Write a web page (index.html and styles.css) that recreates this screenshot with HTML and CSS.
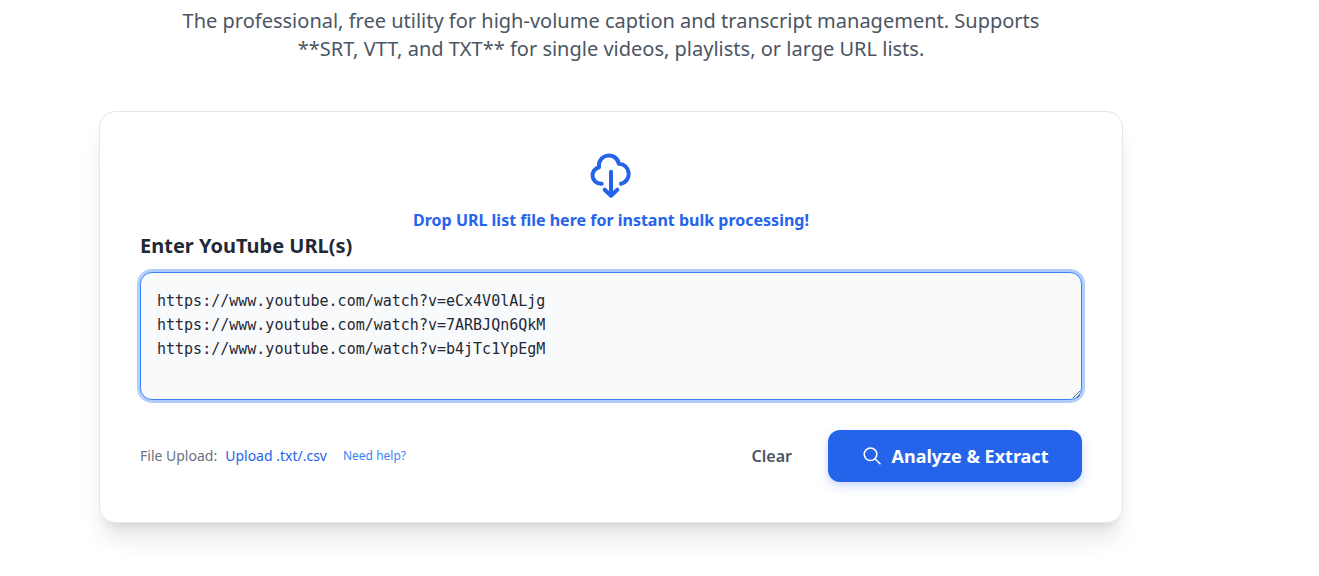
FILE: index.html
```
<!DOCTYPE html>
<html lang="en">
<head>
<meta charset="utf-8">
<meta name="viewport" content="width=device-width, initial-scale=1">
<title>Caption and transcript extractor</title>
<link rel="stylesheet" href="styles.css">
</head>
<body>
<main class="page">
  <p class="intro">The professional, free utility for high-volume caption and transcript management. Supports **SRT, VTT, and TXT** for single videos, playlists, or large URL lists.</p>
  <form class="card">
    <div class="drop">
      <svg class="drop-icon" viewBox="0 0 48 48" aria-hidden="true">
        <path d="M14.7 31.8H13.8A8.4 8.4 0 0 1 12.1 15.2A10 10 0 0 1 31.8 11.7A10.2 10.2 0 0 1 34 31.8M24 19.7V43.5M17.7 37.7L24 43.7L30.3 37.7"/>
      </svg>
      <p class="drop-text">Drop URL list file here for instant bulk processing!</p>
    </div>
    <label class="label" for="urls">Enter YouTube URL(s)</label>
    <textarea class="urls" id="urls" spellcheck="false">https://www.youtube.com/watch?v=eCx4V0lALjg
https://www.youtube.com/watch?v=7ARBJQn6QkM
https://www.youtube.com/watch?v=b4jTc1YpEgM</textarea>
    <div class="actions">
      <div class="upload">
        <span class="upload-label">File Upload:</span>
        <a class="upload-link" href="#upload">Upload .txt/.csv</a>
        <a class="help-link" href="#help">Need help?</a>
      </div>
      <div class="buttons">
        <button class="clear" type="button">Clear</button>
        <button class="analyze" type="button">
          <svg class="search-icon" viewBox="0 0 20 20" aria-hidden="true">
            <circle cx="8.5" cy="8.3" r="6.3"/>
            <path d="M13 12.8L18 17.8"/>
          </svg>
          Analyze &amp; Extract
        </button>
      </div>
    </div>
  </form>
</main>
</body>
</html>
```
FILE: styles.css
```
* {
  box-sizing: border-box;
}

body {
  margin: 0;
  background: #fff;
  color: #1f2937;
  font-family: "Segoe UI", "Noto Sans", "Open Sans", sans-serif;
  font-size: 16px;
  line-height: 24px;
}

.page {
  max-width: 1222px;
  padding: 7px 16px 32px;
}

.intro {
  max-width: 896px;
  margin: 0 auto 48px;
  color: #4b5563;
  font-size: 20px;
  line-height: 28px;
  text-align: center;
}

.card {
  max-width: 1024px;
  margin: 0 auto;
  padding: 40px;
  border: 1px solid #e5e7eb;
  border-radius: 16px;
  background: #fff;
  box-shadow: 0 20px 25px -5px rgba(0, 0, 0, 0.1), 0 8px 10px -6px rgba(0, 0, 0, 0.1);
}

.drop {
  display: flex;
  flex-direction: column;
  align-items: center;
  gap: 8px;
  color: #2563eb;
}

.drop-icon {
  width: 48px;
  height: 48px;
  fill: none;
  stroke: currentColor;
  stroke-width: 4;
  stroke-linecap: round;
  stroke-linejoin: round;
}

.drop-text {
  margin: 0;
  font-weight: 700;
  text-align: center;
}

.label {
  display: block;
  margin-bottom: 12px;
  font-size: 20px;
  font-weight: 700;
  line-height: 28px;
}

.urls {
  display: block;
  width: 100%;
  height: 128px;
  padding: 16px;
  border: 1px solid #3b82f6;
  border-radius: 12px;
  outline: none;
  background: #f9fafb;
  box-shadow: 0 0 0 3px #b1cdfb;
  color: #1f2937;
  font-family: Consolas, "DejaVu Sans Mono", monospace;
  font-size: 15px;
  line-height: 24px;
  resize: vertical;
}

.actions {
  display: flex;
  flex-wrap: wrap;
  align-items: center;
  justify-content: space-between;
  gap: 16px;
  margin-top: 30px;
}

.upload {
  display: flex;
  align-items: center;
  gap: 8px;
  font-size: 14px;
}

.upload-label {
  color: #6b7280;
}

.upload-link {
  color: #2563eb;
  text-decoration: none;
}

.help-link {
  margin-left: 8px;
  color: #3b82f6;
  font-size: 12px;
  text-decoration: none;
}

.buttons {
  display: flex;
  align-items: center;
  gap: 24px;
}

.clear,
.analyze {
  border: 0;
  font-family: inherit;
  font-weight: 700;
  cursor: pointer;
}

.clear {
  padding: 12px;
  background: transparent;
  color: #4b5563;
  font-size: 16px;
  font-weight: 600;
  line-height: 24px;
}

.analyze {
  display: flex;
  align-items: center;
  justify-content: center;
  gap: 10px;
  min-width: 254px;
  padding: 12px 24px;
  border-radius: 12px;
  background: #2563eb;
  box-shadow: 0 4px 10px rgba(37, 99, 235, 0.25);
  color: #fff;
  font-size: 18px;
  line-height: 28px;
}

.search-icon {
  width: 20px;
  height: 20px;
  fill: none;
  stroke: currentColor;
  stroke-width: 1.5;
  stroke-linecap: round;
}
```
